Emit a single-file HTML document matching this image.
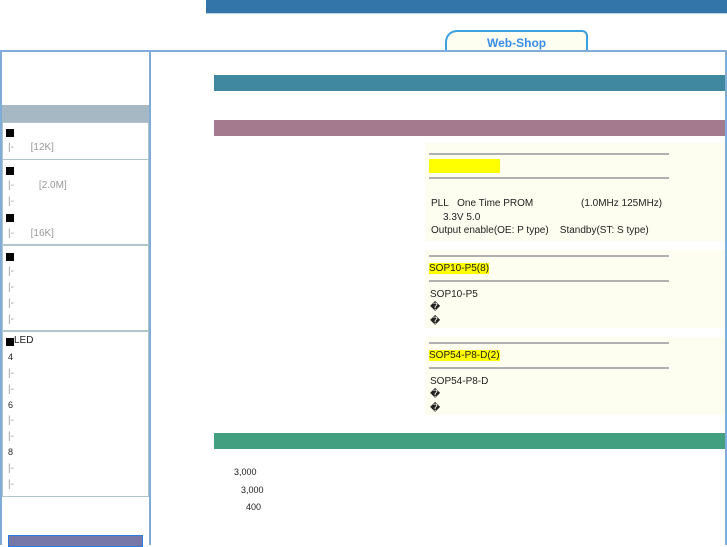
<!DOCTYPE html><html><head><meta charset="utf-8"><style>
body{margin:0;width:727px;height:545px;position:relative;overflow:hidden;background:#fff;font-family:"Liberation Sans","Noto Sans CJK JP",sans-serif;font-size:10px;color:#222}
div{position:absolute;box-sizing:border-box}
.t{white-space:nowrap;font-size:10px}
.g{color:#999}
.sq{width:8px;height:8px;background:#000;left:6px}
.hr{height:2px;background:#b0b0b0;left:429px;width:240px}
.hl{background:#ffff00}
</style></head><body>
<div style="left:206px;top:0;width:521px;height:14px;background:#3375a8;border-bottom:1px solid #b8d4ea"></div>
<div style="left:445px;top:30px;width:143px;height:22px;border:2px solid #3aa0e0;border-bottom:none;border-radius:12px 6px 0 0;background:#fdfdf0"></div>
<div class="t" style="left:487px;top:36px;font-weight:bold;font-size:12px;color:#3a8ee8">Web-Shop</div>
<div style="left:0;top:50px;width:727px;height:2px;background:#80acd8"></div>
<div style="left:0;top:50px;width:2px;height:495px;background:#80acd8"></div>
<div style="left:149px;top:50px;width:2px;height:495px;background:#80acd8"></div>
<div style="left:725px;top:50px;width:2px;height:495px;background:#80acd8"></div>
<div style="left:2px;top:105px;width:147px;height:17px;background:#a5b8c3"></div>
<div style="left:2px;top:122px;width:147px;height:38px;border:1px solid #b0c4cc"></div>
<div style="left:2px;top:159px;width:147px;height:86px;border:1px solid #b0c4cc"></div>
<div style="left:2px;top:245px;width:147px;height:86px;border:1px solid #b0c4cc"></div>
<div style="left:2px;top:331px;width:147px;height:166px;border:1px solid #b0c4cc"></div>
<div class="sq" style="top:129px"></div>
<div class="t g" style="left:8px;top:142px">|-&nbsp;&nbsp;&nbsp;&nbsp;&nbsp;&nbsp;[12K]</div>
<div class="sq" style="top:167px"></div>
<div class="t g" style="left:8px;top:180px">|-&nbsp;&nbsp;&nbsp;&nbsp;&nbsp;&nbsp;&nbsp;&nbsp;&nbsp;[2.0M]</div>
<div class="t g" style="left:8px;top:196px">|-</div>
<div class="sq" style="top:214px"></div>
<div class="t g" style="left:8px;top:228px">|-&nbsp;&nbsp;&nbsp;&nbsp;&nbsp;&nbsp;[16K]</div>
<div class="sq" style="top:253px"></div>
<div class="t g" style="left:8px;top:266px">|-</div>
<div class="t g" style="left:8px;top:282px">|-</div>
<div class="t g" style="left:8px;top:298px">|-</div>
<div class="t g" style="left:8px;top:314px">|-</div>
<div class="sq" style="top:338px"></div>
<div class="t" style="left:14px;top:335px">LED</div>
<div class="t" style="left:8px;top:352px;font-size:9px">4</div>
<div class="t g" style="left:8px;top:368px">|-</div>
<div class="t g" style="left:8px;top:384px">|-</div>
<div class="t" style="left:8px;top:400px;font-size:9px">6</div>
<div class="t g" style="left:8px;top:415px">|-</div>
<div class="t g" style="left:8px;top:431px">|-</div>
<div class="t" style="left:8px;top:447px;font-size:9px">8</div>
<div class="t g" style="left:8px;top:463px">|-</div>
<div class="t g" style="left:8px;top:479px">|-</div>
<div style="left:8px;top:535px;width:135px;height:12px;background:#7878a8;border:1px solid #2a7ae0"></div>
<div style="left:214px;top:75px;width:511px;height:16px;background:#3f88a0"></div>
<div style="left:214px;top:120px;width:511px;height:16px;background:#a37a8e"></div>
<div style="left:214px;top:433px;width:511px;height:16px;background:#42a080"></div>
<div style="left:425px;top:143px;width:300px;height:98px;background:#fdfdf0"></div>
<div style="left:425px;top:250px;width:300px;height:78px;background:#fdfdf0"></div>
<div style="left:425px;top:337px;width:300px;height:78px;background:#fdfdf0"></div>
<div class="hr" style="top:153px"></div>
<div style="left:429px;top:159px;width:71px;height:14px;background:#ffff00"></div>
<div class="hr" style="top:177px"></div>
<div class="t" style="left:431px;top:198px">PLL&nbsp;&nbsp;&nbsp;One Time PROM</div>
<div class="t" style="left:581px;top:198px">(1.0MHz 125MHz)</div>
<div class="t" style="left:443px;top:212px">3.3V 5.0</div>
<div class="t" style="left:431px;top:225px">Output enable(OE: P type)&nbsp;&nbsp;&nbsp;&nbsp;Standby(ST: S type)</div>
<div class="hr" style="top:255px"></div>
<div class="t hl" style="left:429px;top:263px">SOP10-P5(8)</div>
<div class="hr" style="top:280px"></div>
<div class="t" style="left:430px;top:289px">SOP10-P5</div>
<div class="t" style="left:430px;top:302px">�</div>
<div class="t" style="left:430px;top:316px">�</div>
<div class="hr" style="top:342px"></div>
<div class="t hl" style="left:429px;top:350px">SOP54-P8-D(2)</div>
<div class="hr" style="top:367px"></div>
<div class="t" style="left:430px;top:376px">SOP54-P8-D</div>
<div class="t" style="left:430px;top:389px">�</div>
<div class="t" style="left:430px;top:403px">�</div>
<div class="t" style="left:234px;top:467px;font-size:9px">3,000</div>
<div class="t" style="left:241px;top:485px;font-size:9px">3,000</div>
<div class="t" style="left:246px;top:502px;font-size:9px">400</div>
</body></html>
